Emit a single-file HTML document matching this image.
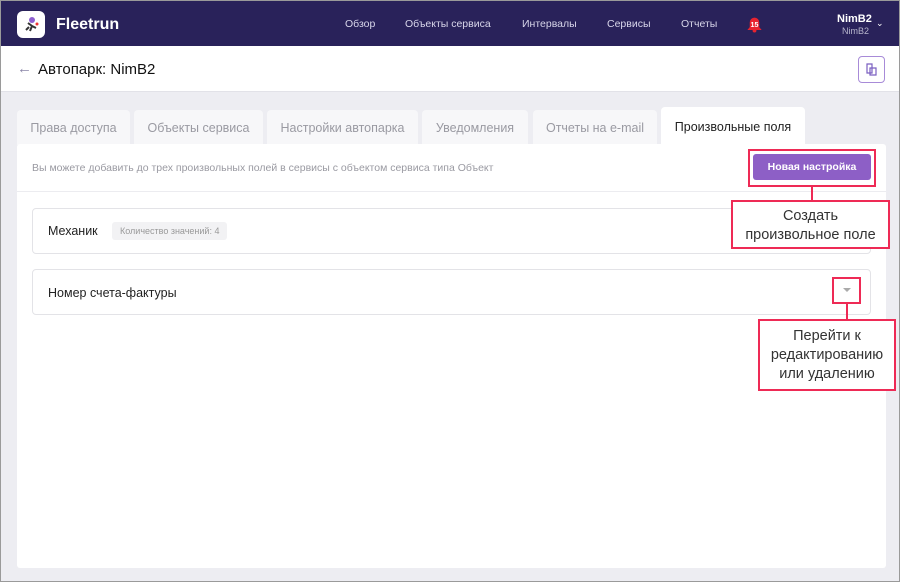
<!DOCTYPE html>
<html><head><meta charset="utf-8"><style>
*{box-sizing:border-box;margin:0;padding:0}
body{width:900px;height:582px;overflow:hidden;font-family:"Liberation Sans",sans-serif;background:#ededf2;position:relative;border:1px solid #9a9a9a}
.nav{position:absolute;left:0;top:0;width:898px;height:45px;background:#29225a;color:#fff}
.logo{position:absolute;left:16px;top:10px;width:28px;height:27px;background:#fff;border-radius:6px}
.brand{position:absolute;left:55px;top:15px;font-size:16px;font-weight:bold}
.nl{position:absolute;top:17px;font-size:10.5px;color:#d8d6ea}
.hdr{position:absolute;left:0;top:45px;width:898px;height:46px;background:#fff;border-bottom:1px solid #e2e2e8}
.tab{position:absolute;top:109px;height:35px;background:#f7f7f9;border-radius:4px 4px 0 0;font-size:12.5px;color:#9a9aa2;text-align:center;line-height:36px}
.card{position:absolute;left:16px;top:143px;width:869px;height:424px;background:#fff;border-radius:3px}
.row{position:absolute;left:15px;width:839px;height:46px;border:1px solid #e3e3e7;border-radius:4px;font-size:12.5px;color:#222}
.red{position:absolute;border:2px solid #ee2a55;background:#fff;color:#333;font-size:14.5px;text-align:center;line-height:19px}
.ln{position:absolute;background:#ee2a55;width:2px}
</style></head><body>
<div class="nav">
<div class="logo"><svg width="28" height="27" viewBox="0 0 28 27"><circle cx="15" cy="9" r="3" fill="#8e5fd0"/><path d="M11 12l4 3-2 5M15 15l4 2M9 19l3-3" stroke="#333" stroke-width="2" fill="none"/><circle cx="20" cy="13" r="1.5" fill="#e33"/></svg></div>
<div class="brand">Fleetrun</div>
<div class="nl" style="left:344px">Обзор</div>
<div class="nl" style="left:404px">Объекты сервиса</div>
<div class="nl" style="left:521px">Интервалы</div>
<div class="nl" style="left:606px">Сервисы</div>
<div class="nl" style="left:680px">Отчеты</div>
<svg style="position:absolute;left:744px;top:13px" width="19" height="19" viewBox="0 0 16 16"><path d="M2 13.5h12l-2-2.5V7a4 4 0 0 0-8 0v4z" fill="#e8232f"/><circle cx="8" cy="14" r="1.6" fill="#e8232f"/><text x="8" y="11" font-size="6" fill="#fff" text-anchor="middle" font-family="Liberation Sans" font-weight="bold">15</text></svg>
<div style="position:absolute;left:836px;top:12px;font-size:11px;font-weight:bold">NimB2</div>
<div style="position:absolute;left:841px;top:25px;font-size:9px;color:#b8b6cc">NimB2</div>
<div style="position:absolute;left:875px;top:17px;font-size:9px">⌄</div>
</div>
<div class="hdr">
<div style="position:absolute;left:16px;top:14px;font-size:15px;color:#8a86a8">←</div>
<div style="position:absolute;left:37px;top:15px;font-size:15px;color:#111">Автопарк: NimB2</div>
<div style="position:absolute;left:857px;top:10px;width:27px;height:27px;border:1px solid #a88bd8;border-radius:4px"><svg width="25" height="25" viewBox="0 0 25 25"><path d="M8 7h5v9H8zM11 11h6v7h-6z" fill="#fff" stroke="#7a5fc0" stroke-width="1.2"/></svg></div>
</div>
<div class="tab" style="left:16px;width:113px">Права доступа</div>
<div class="tab" style="left:133px;width:129px">Объекты сервиса</div>
<div class="tab" style="left:266px;width:151px">Настройки автопарка</div>
<div class="tab" style="left:421px;width:106px">Уведомления</div>
<div class="tab" style="left:532px;width:124px">Отчеты на e-mail</div>
<div class="tab" style="left:660px;width:144px;top:106px;height:38px;background:#fff;color:#222;line-height:40px">Произвольные поля</div>
<div class="card">
<div style="position:absolute;left:15px;top:18px;font-size:10.5px;color:#9a9aa2">Вы можете добавить до трех произвольных полей в сервисы с объектом сервиса типа Объект</div>
<div style="position:absolute;left:0;top:47px;width:869px;height:1px;background:#ececf0"></div>
<div class="row" style="top:64px"><span style="position:absolute;left:15px;top:15px">Механик</span><span style="position:absolute;left:79px;top:13px;background:#f2f2f4;color:#999;font-size:9px;padding:4px 8px;border-radius:3px">Количество значений: 4</span></div>
<div class="row" style="top:125px"><span style="position:absolute;left:15px;top:16px">Номер счета-фактуры</span><span style="position:absolute;left:810px;top:18px;width:0;height:0;border-left:4px solid transparent;border-right:4px solid transparent;border-top:4px solid #aaa"></span></div>
</div>
<div class="red" style="left:747px;top:148px;width:128px;height:38px"><div style="margin:3px;background:#8d5fc6;border-radius:3px;color:#fff;font-size:10.5px;font-weight:bold;line-height:26px">Новая настройка</div></div>
<div class="ln" style="left:810px;top:186px;height:14px"></div>
<div class="red" style="left:730px;top:199px;width:159px;height:49px;padding-top:5px">Создать<br>произвольное поле</div>
<div class="red" style="left:831px;top:276px;width:29px;height:27px;background:none"></div>
<div class="ln" style="left:845px;top:303px;height:16px"></div>
<div class="red" style="left:757px;top:318px;width:138px;height:72px;padding-top:6px">Перейти к<br>редактированию<br>или удалению</div>
</body></html>
